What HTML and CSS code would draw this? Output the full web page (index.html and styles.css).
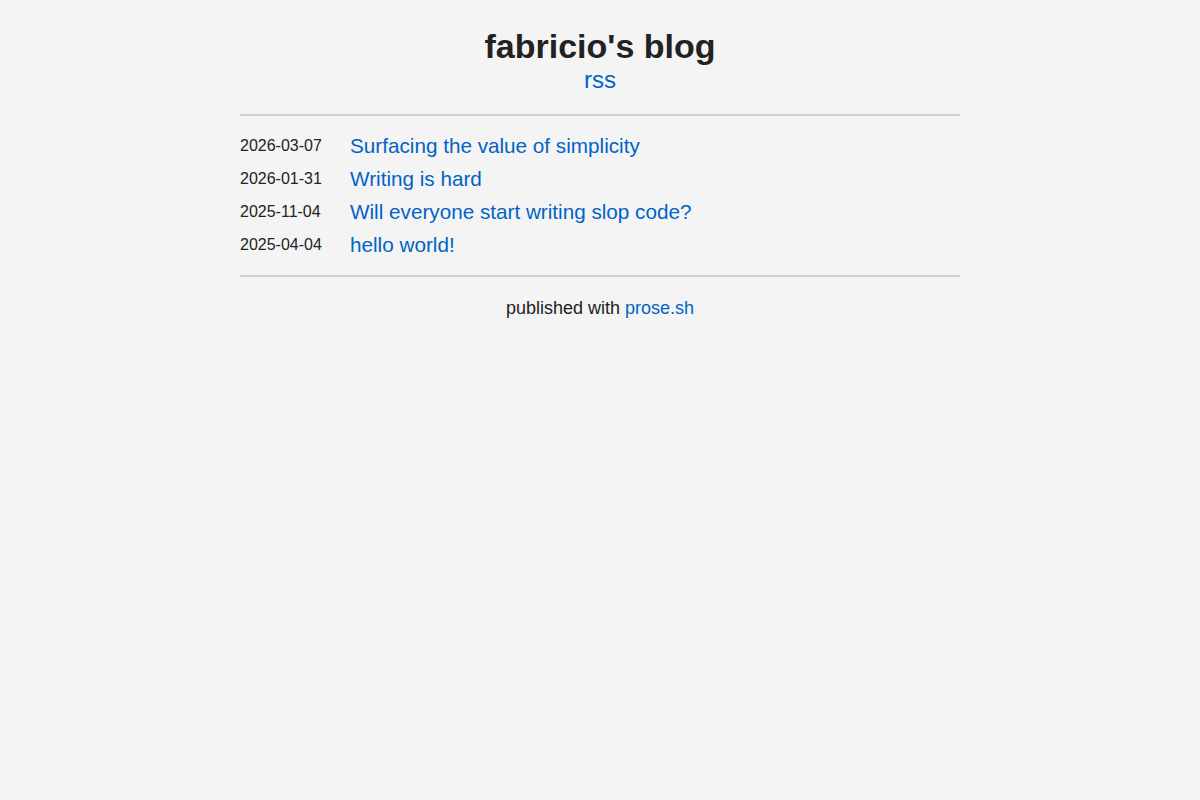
FILE: index.html
```html
<!DOCTYPE html>
<html lang="en">
<head>
  <meta charset="UTF-8" />
  <meta name="viewport" content="width=device-width, initial-scale=1.0"/>
  <title>fabricio's blog</title>
  <link rel="stylesheet" href="styles.css">
</head>
<body>
  <header class="site-header">
    <h1>fabricio's blog</h1>
    <a class="rss" href="#">rss</a>
  </header>

  <main class="posts">
    <!-- post list -->
    <div class="post">
      <time>2026-03-07</time>
      <a href="#">Surfacing the value of simplicity</a>
    </div>
    <div class="post">
      <time>2026-01-31</time>
      <a href="#">Writing is hard</a>
    </div>
    <div class="post">
      <time>2025-11-04</time>
      <a href="#">Will everyone start writing slop code?</a>
    </div>
    <div class="post">
      <time>2025-04-04</time>
      <a href="#">hello world!</a>
    </div>
  </main>

  <footer class="site-footer">
    published with <a href="#">prose.sh</a>
  </footer>
</body>
</html>
```

FILE: styles.css
```css
body { font-family: "Liberation Sans", Arial, sans-serif; background: #f4f4f4; color: #222; margin: 0; }
a { color: #0063c6; text-decoration: none; }
.site-header, .posts, .site-footer { max-width: 720px; margin: 0 auto; }
.site-header { text-align: center; padding: 27px 0 20px; border-bottom: 2px solid #d0d0d0; }
.site-header h1 { font-size: 34px; line-height: 39px; margin: 0; }
.rss { font-size: 24px; line-height: 28px; }
.posts { padding: 13px 0 14px; border-bottom: 2px solid #d0d0d0; }
.post { display: flex; align-items: center; height: 33px; }
.post time { width: 110px; font-size: 16px; flex-shrink: 0; }
.post a { font-size: 20.7px; }
.site-footer { text-align: center; font-size: 18px; padding-top: 21px; }
```
